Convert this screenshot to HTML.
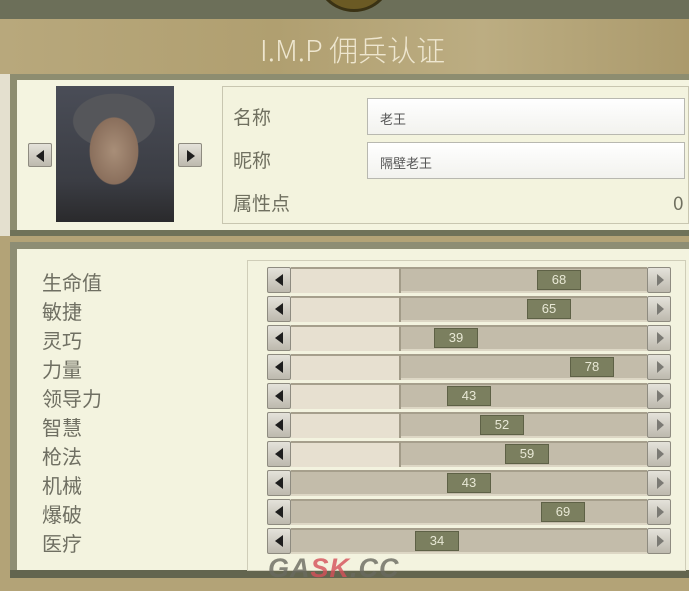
<!DOCTYPE html>
<html><head><meta charset="utf-8"><style>
*{margin:0;padding:0;box-sizing:border-box}
body{width:689px;height:591px;overflow:hidden;position:relative;background:#b3a377;font-family:"Liberation Sans","Noto Sans CJK SC",sans-serif}
.abs{position:absolute}
.top{left:0;top:0;width:689px;height:19px;background:#6c6f59}
.med{left:315px;top:-66px;width:78px;height:78px;border-radius:50%;background:#6b5a24;border:3px solid #3a3214}
.title{left:0;top:19px;width:689px;height:55px;background:linear-gradient(90deg,#b8a87c,#b09f70 40%,#bcad82 70%,#ab9a6c);}
.title span{position:absolute;left:8px;width:689px;top:9px;text-align:center;color:#eee6cf;font-size:29px;font-family:"Noto Sans CJK SC",sans-serif;font-weight:300}
.strip{left:0;top:74px;width:10px;height:162px;background:#e4e0cf}
.p1{left:10px;top:74px;width:679px;height:162px;background:#8d8d70;}
.p1i{left:17px;top:80px;width:672px;height:150px;background:#f4f4e0}
.p1b{left:10px;top:230px;width:679px;height:6px;background:#6f7259}
.p2{left:10px;top:242px;width:679px;height:336px;background:#8d8d74}
.p2i{left:17px;top:249px;width:672px;height:321px;background:#f3f3df}
.p2b{left:10px;top:570px;width:679px;height:8px;background:#63654f}
.btn{width:24px;height:24px;background:linear-gradient(#e4e2da,#bdb9ae);border:1px solid #8e8b80;border-radius:2px}
.btn:after{content:"";position:absolute;top:6px;border-top:6px solid transparent;border-bottom:6px solid transparent}
.l:after{left:7px;border-right:8px solid #1e1e1e}
.r:after{left:8px;border-left:8px solid #1e1e1e}
.r2:after{left:9px;border-left:7px solid #7b7a74}
.portrait{left:56px;top:86px;width:118px;height:136px;background:radial-gradient(ellipse 40px 55px at 58px 65px,#a88e78 0,#8a6f5c 60%,transparent 62%),radial-gradient(ellipse 45px 30px at 58px 35px,#55565a 0,#55565a 90%,transparent 92%),linear-gradient(#4a4d57,#3b3d44 70%,#2a2a2c)}
.info{left:222px;top:86px;width:467px;height:138px;border:1px solid #c8c6b0;background:#f3f3de}
.lab{color:#707060;font-size:19px;font-family:"Noto Sans CJK SC",sans-serif;line-height:24px}
.inp{left:367px;width:318px;height:37px;background:linear-gradient(#fff,#f2f2ee);border:1px solid #b8b8b0;font-size:13px;color:#555;padding:10px 0 0 12px}
.box{left:247px;top:260px;width:439px;height:311px;border:1px solid #cfcdb8}
.track{left:291px;width:356px;height:26px;background:#c3bcaa;border-top:2px solid #a69f8c;border-bottom:2px solid #ddd7c5}
.light{left:291px;width:110px;height:26px;background:#e7e0d0;border-top:2px solid #a69f8c;border-right:2px solid #a29b88}
.val{width:44px;height:20px;background:#7b7f5f;border:1px solid #5e6146;color:#e8e8d5;font-size:13px;text-align:center;line-height:18px}
.sl{left:42px;color:#6f6f62;font-size:20px;font-family:"Noto Sans CJK SC",sans-serif;line-height:24px}
.wm{left:268px;top:553px;font:italic bold 27px "Liberation Sans",sans-serif;color:#6a6a60;letter-spacing:1px;opacity:.8}
.wm b{color:#d6505a}
</style></head><body>
<div class="abs top"></div><div class="abs med"></div>
<div class="abs title"><span>I.M.P 佣兵认证</span></div>
<div class="abs strip"></div>
<div class="abs p1"></div><div class="abs p1i"></div><div class="abs p1b"></div>
<div class="abs btn l" style="left:28px;top:143px"></div>
<div class="abs portrait"></div>
<div class="abs btn r" style="left:178px;top:143px"></div>
<div class="abs info"></div>
<div class="abs lab" style="left:233px;top:105px">名称</div>
<div class="abs inp" style="top:98px">老王</div>
<div class="abs lab" style="left:233px;top:148px">昵称</div>
<div class="abs inp" style="top:142px">隔壁老王</div>
<div class="abs lab" style="left:233px;top:191px">属性点</div>
<div class="abs lab" style="left:673px;top:191px">0</div>
<div class="abs p2"></div><div class="abs p2i"></div><div class="abs p2b"></div>
<div class="abs box"></div>
<div id="rows"></div>
<div class="abs wm">GA<b>SK</b>.CC</div>
<script>
var d=[["生命值",68,559,1],["敏捷",65,549,1],["灵巧",39,456,1],["力量",78,592,1],["领导力",43,469,1],["智慧",52,502,1],["枪法",59,527,1],["机械",43,469,0],["爆破",69,563,0],["医疗",34,437,0]];
var h="";
d.forEach(function(r,i){var y=267+i*29;
h+='<div class="abs sl" style="top:'+(y+3)+'px">'+r[0]+'</div>';
h+='<div class="abs btn l" style="left:267px;top:'+y+'px;height:26px"></div>';
h+='<div class="abs track" style="top:'+y+'px"></div>';
if(r[3])h+='<div class="abs light" style="top:'+y+'px"></div>';
h+='<div class="abs val" style="left:'+(r[2]-22)+'px;top:'+(y+3)+'px">'+r[1]+'</div>';
h+='<div class="abs btn r2" style="left:647px;top:'+y+'px;height:26px"></div>';});
document.getElementById("rows").innerHTML=h;
</script>
</body></html>
